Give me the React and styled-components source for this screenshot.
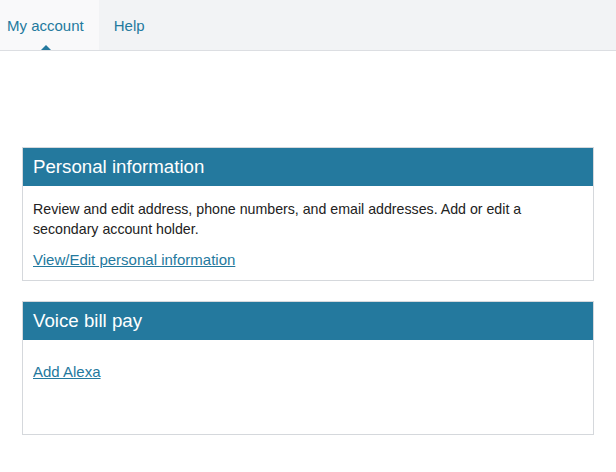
import React from 'react';
import styled, { createGlobalStyle } from 'styled-components';

const GlobalStyle = createGlobalStyle`
  body {
    margin: 0;
    background: #ffffff;
    font-family: 'Liberation Sans', Arial, sans-serif;
    color: #222222;
  }
`;

const tabs = [
  { label: 'My account', active: true },
  { label: 'Help', active: false },
];

const cards = [
  {
    title: 'Personal information',
    text: 'Review and edit address, phone numbers, and email addresses. Add or edit a secondary account holder.',
    link: 'View/Edit personal information',
  },
  {
    title: 'Voice bill pay',
    link: 'Add Alexa',
    tall: true,
  },
];

const App = () => {
  return (
    <>
      <GlobalStyle />
      <Nav>
        {tabs.map((tab) => (
          <Tab key={tab.label} $active={tab.active}>
            {tab.label}
          </Tab>
        ))}
      </Nav>
      <Main>
        {cards.map((card) => (
          <Card key={card.title}>
            <CardHeader>{card.title}</CardHeader>
            <CardBody $tall={card.tall}>
              {card.text && <p>{card.text}</p>}
              <a href="#">{card.link}</a>
            </CardBody>
          </Card>
        ))}
      </Main>
    </>
  );
};

export default App;

const Nav = styled.nav`
  display: flex;
  height: 50px;
  background: #f2f3f5;
  border-bottom: 1px solid #dcdee2;
`;

const Tab = styled.div`
  position: relative;
  display: flex;
  align-items: center;
  padding: 0 15px;
  font-size: 15px;
  color: #24799e;
  background: ${({ $active }) => ($active ? '#f9f9fa' : 'transparent')};
  cursor: pointer;

  &:first-child {
    padding-left: 7px;
  }

  &::after {
    content: '';
    display: ${({ $active }) => ($active ? 'block' : 'none')};
    position: absolute;
    bottom: 0;
    left: 50%;
    margin-left: -8px;
    border: 5px solid transparent;
    border-bottom-color: #24799e;
    border-top-width: 0;
  }
`;

const Main = styled.main`
  display: flex;
  flex-direction: column;
  gap: 20px;
  padding: 96px 22px 0 22px;
`;

const Card = styled.section`
  border: 1px solid #d5d8dc;
  background: #ffffff;
`;

const CardHeader = styled.h2`
  margin: 0;
  height: 38px;
  display: flex;
  align-items: center;
  padding: 0 10px;
  background: #24799e;
  color: #ffffff;
  font-size: 18.7px;
  font-weight: 400;
`;

const CardBody = styled.div`
  box-sizing: border-box;
  padding: ${({ $tall }) => ($tall ? '22px' : '13px')} 10px 10px;
  min-height: ${({ $tall }) => ($tall ? '94px' : 'auto')};
  font-size: 14.2px;
  line-height: 20px;

  p {
    margin: 0 0 11px;
  }

  a {
    font-size: 15px;
    color: #24799e;
    text-decoration: underline;
  }
`;
